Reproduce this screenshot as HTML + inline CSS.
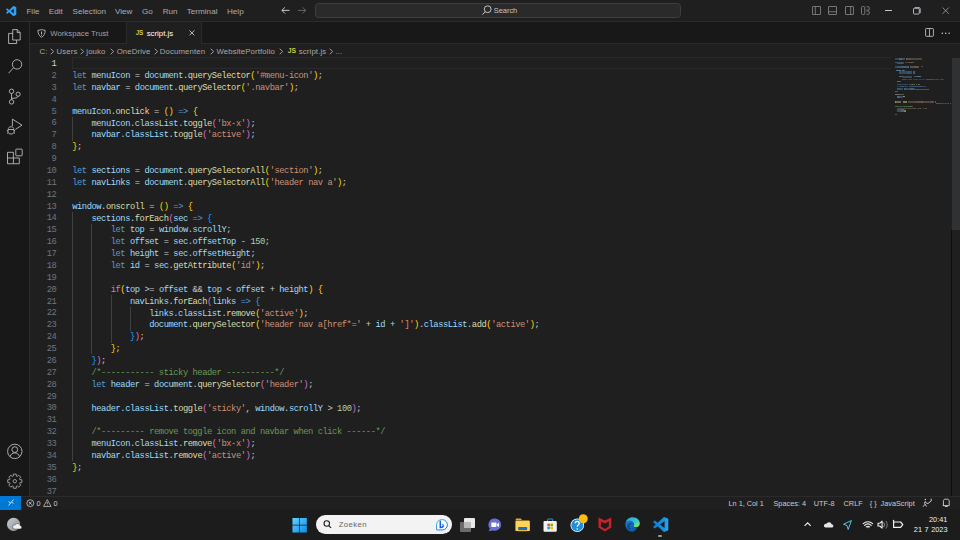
<!DOCTYPE html>
<html><head><meta charset="utf-8">
<style>
*{margin:0;padding:0;box-sizing:border-box}
html,body{width:960px;height:540px;overflow:hidden;background:#1f1f1f;font-family:"Liberation Sans",sans-serif;color:#ccc}
.a{position:absolute}
#title{left:0;top:0;width:960px;height:21.875px;background:#1f1f1f;border-bottom:0.7px solid #2b2b2b}
.menu{top:0.7px;height:21.875px;line-height:21.875px;font-size:8.125px;color:#adadad;white-space:nowrap}
#tabs{left:30px;top:21.875px;width:930px;height:21.875px;background:#181818;border-bottom:0.7px solid #2b2b2b}
#act{left:0;top:21.875px;width:30px;height:474.375px;background:#181818;border-right:0.7px solid #2b2b2b}
#bc{left:30px;top:43.75px;width:930px;height:13.75px;background:#1f1f1f}
.bct{top:44.6px;height:13.75px;line-height:13.75px;font-size:7.8px;letter-spacing:0.12px;color:#a9a9a9;white-space:nowrap}
#editor{left:30px;top:57.5px;width:930px;height:438.75px;background:#1f1f1f}
.ln{position:absolute;left:0;width:26.3px;text-align:right;font-family:"Liberation Mono",monospace;font-size:8.75px;letter-spacing:-0.4375px;line-height:11.875px;padding-top:1.6px;color:#6e7681}
.code{position:absolute;left:42.2px;padding-top:1.7px;font-family:"Liberation Mono",monospace;font-size:8.75px;letter-spacing:-0.4375px;line-height:11.875px;white-space:pre;color:#ccc}
.k{color:#569cd6}.c{color:#c586c0}.v{color:#9cdcfe}.f{color:#dcdcaa}.s{color:#ce9178}.n{color:#b5cea8}.m{color:#6a9955}
.b1{color:#ffd700}.b2{color:#da70d6}.b3{color:#179fff}
.ig{position:absolute;width:0.7px;background:#404040}
#status{left:0;top:496.25px;width:960px;height:13.75px;background:#1f1f1f;border-top:0.7px solid #2b2b2b}
.st{top:496.85px;height:13.75px;line-height:14px;font-size:7.3px;color:#ccc;white-space:nowrap}
#taskbar{left:0;top:510px;width:960px;height:30px;background:#1c1c1c}
svg{position:absolute;overflow:visible}
</style></head><body>
<!-- title bar -->
<div id="title" class="a"></div>
<svg style="left:5.7px;top:5.8px" width="10.4" height="10.2" viewBox="0 0 100 100"><path fill="#2ea2f2" d="M96.46 10.8L75.86.87a6.23 6.23 0 0 0-7.1 1.2L29.2 38.16 12 25.12a4.16 4.16 0 0 0-5.32.24L1.17 30.37a4.17 4.17 0 0 0 0 6.16L16.08 50 1.17 63.47a4.17 4.17 0 0 0 0 6.16l5.52 5a4.16 4.16 0 0 0 5.32.24l17.2-13.04 39.56 36.09a6.23 6.23 0 0 0 7.1 1.2l20.6-9.92A6.24 6.24 0 0 0 100 83.56V16.44a6.24 6.24 0 0 0-3.54-5.64zM75 72.7L45 50l30-22.7z"/></svg>
<div class="a menu" style="left:26.4px">File</div>
<div class="a menu" style="left:48.8px">Edit</div>
<div class="a menu" style="left:72.6px">Selection</div>
<div class="a menu" style="left:115px">View</div>
<div class="a menu" style="left:142px">Go</div>
<div class="a menu" style="left:162.7px">Run</div>
<div class="a menu" style="left:186.8px">Terminal</div>
<div class="a menu" style="left:227px">Help</div>
<svg style="left:276px;top:2px" width="36" height="18" viewBox="276 2 36 18" fill="none"><path d="M289.5 10.4H282M285 7.3L281.9 10.4L285 13.5" stroke="#d6dae0" stroke-width="0.9"/><path d="M298 10.4H305.6M302.6 7.3L305.7 10.4L302.6 13.5" stroke="#6e6e6e" stroke-width="0.9"/></svg>
<div class="a" style="left:315.1px;top:2.9px;width:365.9px;height:14.8px;background:#2a2a2a;border:0.7px solid #3e3e3e;border-radius:3.5px"></div>
<svg style="left:476px;top:2px" width="20" height="18" viewBox="476 2 20 18" fill="none"><circle cx="487.7" cy="9.2" r="3.4" stroke="#c8c8c8" stroke-width="0.95"/><path d="M485.3 11.6L482.4 14.6" stroke="#c8c8c8" stroke-width="1"/></svg>
<div class="a menu" style="left:493.7px;top:-0.3px;font-size:7.45px;color:#c4c4c4">Search</div>
<!-- layout icons -->
<svg style="left:812.1px;top:6px" width="9" height="9" viewBox="0 0 18 18"><rect x="1" y="1" width="16" height="16" rx="1" stroke="#8b8b8b" stroke-width="1.6" fill="none"/><path d="M6.6 1v16" stroke="#8b8b8b" stroke-width="1.6"/></svg>
<svg style="left:828.2px;top:6px" width="9" height="9" viewBox="0 0 18 18"><rect x="1" y="1" width="16" height="16" rx="1" stroke="#8b8b8b" stroke-width="1.6" fill="none"/><path d="M1 11.5h16" stroke="#8b8b8b" stroke-width="1.6"/></svg>
<svg style="left:844.8px;top:6px" width="9" height="9" viewBox="0 0 18 18"><rect x="1" y="1" width="16" height="16" rx="1" stroke="#8b8b8b" stroke-width="1.6" fill="none"/><path d="M11.4 1v16" stroke="#8b8b8b" stroke-width="1.6"/></svg>
<svg style="left:861.2px;top:6px" width="9" height="9" viewBox="0 0 18 18"><rect x="1" y="1" width="6.5" height="16" rx="2" stroke="#8b8b8b" stroke-width="1.6" fill="none"/><path d="M11 1.5h4a1.5 1.5 0 0 1 1.5 1.5v3.5a1.5 1.5 0 0 1-1.5 1.5h-4M11 10h4a1.5 1.5 0 0 1 1.5 1.5V15a1.5 1.5 0 0 1-1.5 1.5h-4" stroke="#8b8b8b" stroke-width="1.6" fill="none"/></svg>
<div class="a" style="left:884.7px;top:10.2px;width:7.6px;height:0.9px;background:#bfc6ce"></div>
<svg style="left:912.9px;top:6.6px" width="7.5" height="7.6" viewBox="0 0 15 15"><rect x="1" y="2.5" width="11.5" height="11.5" rx="1.5" stroke="#bfc6ce" stroke-width="1.8" fill="none"/><path d="M3.5 1h8.5a2.5 2.5 0 0 1 2.5 2.5V12" stroke="#bfc6ce" stroke-width="1.6" fill="none"/></svg>
<svg style="left:941.8px;top:6.9px" width="7.4" height="7.3" viewBox="0 0 15 15"><path d="M1 1l13 13M14 1L1 14" stroke="#bfc6ce" stroke-width="1.3"/></svg>

<!-- activity bar -->
<div id="act" class="a"></div>
<svg style="left:0;top:0" width="30" height="500" viewBox="0 0 30 500" fill="none" stroke="#c4c4c4" stroke-width="0.85" stroke-linejoin="round">
<path d="M12.7 29.6H17.2L20.2 32.6V40H12.7Z M17.2 29.6V32.6H20.2 M12.7 33.4H8.6V43.5H16.6V40"/>
<circle cx="17.05" cy="64.4" r="4.7"/><path d="M13.6 67.6L8.5 73.3"/>
<circle cx="11.55" cy="91.3" r="2.2"/><circle cx="11.55" cy="101.9" r="2.2"/><circle cx="18.1" cy="94.2" r="2.1"/><path d="M11.55 93.5V99.7M18 96.3C17.5 98 15.5 98.3 11.6 98.3"/>
<path d="M12.4 126V119.1L22 125.2L15.4 129.4"/><path d="M8.3 128.6C8.6 127.2 9.7 126.8 11 126.8S13.4 127.2 13.7 128.6M8 129.5V132.2C8 133.2 9.4 134 11 134S14 133.2 14 132.2V129.5Z M7 130.6H8M7 133H8M14 130.6H15M14 133H15"/>
<path d="M7.5 152.3H13.4V163.75H7.5Z M7.5 158H19.3V163.75H13.4"/><rect x="15.8" y="149.1" width="6.4" height="6.7" rx="0.6"/>
<circle cx="14.8" cy="451.4" r="7.2"/><circle cx="14.8" cy="449.6" r="2.9"/><path d="M10 456.6C10.8 454.2 12.6 452.9 14.8 452.9S18.8 454.2 19.6 456.6"/>
<path stroke="#9c9c9c" stroke-width="1.0" d="M13.23 476.14 L13.37 474.14 L16.23 474.14 L16.37 476.14 L17.27 476.51 L18.78 475.20 L20.80 477.22 L19.49 478.73 L19.86 479.63 L21.86 479.77 L21.86 482.63 L19.86 482.77 L19.49 483.67 L20.80 485.18 L18.78 487.20 L17.27 485.89 L16.37 486.26 L16.23 488.26 L13.37 488.26 L13.23 486.26 L12.33 485.89 L10.82 487.20 L8.80 485.18 L10.11 483.67 L9.74 482.77 L7.74 482.63 L7.74 479.77 L9.74 479.63 L10.11 478.73 L8.80 477.22 L10.82 475.20 L12.33 476.51Z"/><circle cx="14.8" cy="481.2" r="1.7" stroke="#9c9c9c" stroke-width="1.0"/>
</svg>

<!-- tabs -->
<div id="tabs" class="a"></div>
<div class="a" style="left:126px;top:21.875px;width:76px;height:22.5px;background:#1f1f1f;border-left:0.7px solid #2b2b2b;border-right:0.7px solid #2b2b2b"></div>
<svg style="left:36.8px;top:28.9px" width="9.1" height="8.9" viewBox="0 0 16 16"><path d="M1.5 2.2C4 2.2 6 1.8 8 1c2 .8 4 1.2 6.5 1.2 0 6.5-2.5 10.5-6.5 12.8C4 12.7 1.5 8.7 1.5 2.2Z" stroke="#cccccc" stroke-width="1.4" fill="none" stroke-linejoin="round"/><path d="M8 4.5v5.5" stroke="#ddd" stroke-width="1.5"/><circle cx="8" cy="12" r="0.8" fill="#ccc"/></svg>
<div class="a" style="left:50.2px;top:22.5px;height:21.875px;line-height:21.5px;font-size:7.8px;color:#a0a0a0;white-space:nowrap">Workspace Trust</div>
<div class="a" style="left:135.8px;top:22.6px;height:21.875px;line-height:20.5px;font-size:6.3px;font-weight:bold;color:#cbcb41;letter-spacing:-0.2px;white-space:nowrap">JS</div>
<div class="a" style="left:146.7px;top:22.8px;height:21.875px;line-height:21.5px;font-size:7.8px;color:#ffffff;white-space:nowrap">script.js</div>
<svg style="left:189.2px;top:29.5px" width="5.8" height="5.8" viewBox="0 0 12 12"><path d="M1 1l10 10M11 1L1 11" stroke="#ddd" stroke-width="1.7"/></svg>
<svg style="left:925.1px;top:28px" width="9" height="8.8" viewBox="0 0 18 18"><rect x="1" y="1" width="16" height="16" rx="1.5" stroke="#cccccc" stroke-width="1.7" fill="none"/><path d="M9 1v16" stroke="#ccc" stroke-width="1.6"/></svg>
<svg style="left:940.5px;top:31.5px" width="10" height="2.5" viewBox="0 0 10 2.5"><circle cx="1.3" cy="1.25" r="0.75" fill="#ccc"/><circle cx="4.7" cy="1.25" r="0.75" fill="#ccc"/><circle cx="8.1" cy="1.25" r="0.75" fill="#ccc"/></svg>

<!-- breadcrumbs -->
<div id="bc" class="a"></div>
<div class="a bct" style="left:39.4px">C:</div>
<div class="a bct" style="left:56.6px">Users</div>
<div class="a bct" style="left:86.3px">jouko</div>
<div class="a bct" style="left:116.7px">OneDrive</div>
<div class="a bct" style="left:159.8px">Documenten</div>
<div class="a bct" style="left:216.4px">WebsitePortfolio</div>
<div class="a bct" style="left:287.8px;top:43.9px;font-size:6.8px;font-weight:bold;color:#cbcb41;letter-spacing:-0.2px">JS</div>
<div class="a bct" style="left:298.8px">script.js</div>
<div class="a bct" style="left:335.5px">...</div>
<svg style="left:50px;top:47.6px" width="4.4" height="7" viewBox="0 0 8 12"><path d="M1.2 1l5.6 5-5.6 5" stroke="#b4b4b4" stroke-width="1.5" fill="none"/></svg>
<svg style="left:80px;top:47.6px" width="4.4" height="7" viewBox="0 0 8 12"><path d="M1.2 1l5.6 5-5.6 5" stroke="#b4b4b4" stroke-width="1.5" fill="none"/></svg>
<svg style="left:110px;top:47.6px" width="4.4" height="7" viewBox="0 0 8 12"><path d="M1.2 1l5.6 5-5.6 5" stroke="#b4b4b4" stroke-width="1.5" fill="none"/></svg>
<svg style="left:153.5px;top:47.6px" width="4.4" height="7" viewBox="0 0 8 12"><path d="M1.2 1l5.6 5-5.6 5" stroke="#b4b4b4" stroke-width="1.5" fill="none"/></svg>
<svg style="left:210px;top:47.6px" width="4.4" height="7" viewBox="0 0 8 12"><path d="M1.2 1l5.6 5-5.6 5" stroke="#b4b4b4" stroke-width="1.5" fill="none"/></svg>
<svg style="left:279px;top:47.6px" width="4.4" height="7" viewBox="0 0 8 12"><path d="M1.2 1l5.6 5-5.6 5" stroke="#b4b4b4" stroke-width="1.5" fill="none"/></svg>
<svg style="left:329.3px;top:47.6px" width="4.4" height="7" viewBox="0 0 8 12"><path d="M1.2 1l5.6 5-5.6 5" stroke="#b4b4b4" stroke-width="1.5" fill="none"/></svg>

<!-- editor -->
<div id="editor" class="a">
<div class="a" style="left:42.2px;top:-0.8px;width:819px;height:11.9px;border:0.9px solid #2a2a2a;border-right:none"></div>
<div class="ig" style="left:42.20px;top:59.375px;height:23.750px"></div>
<div class="ig" style="left:42.20px;top:154.375px;height:249.375px"></div>
<div class="ig" style="left:61.45px;top:166.250px;height:130.625px"></div>
<div class="ig" style="left:80.70px;top:237.500px;height:47.500px"></div>
<div class="ig" style="left:99.95px;top:249.375px;height:23.750px"></div>
<div class="ln" style="top:0.000px;color:#cccccc">1</div>
<div class="ln" style="top:11.875px;color:#6e7681">2</div>
<div class="code" style="top:11.875px"><span class="k">let</span> <span class="v">menuIcon</span> = <span class="v">document</span>.<span class="f">querySelector</span><span class="b1">(</span><span class="s">&#x27;#menu-icon&#x27;</span><span class="b1">)</span>;</div>
<div class="ln" style="top:23.750px;color:#6e7681">3</div>
<div class="code" style="top:23.750px"><span class="k">let</span> <span class="v">navbar</span> = <span class="v">document</span>.<span class="f">querySelector</span><span class="b1">(</span><span class="s">&#x27;.navbar&#x27;</span><span class="b1">)</span>;</div>
<div class="ln" style="top:35.625px;color:#6e7681">4</div>
<div class="ln" style="top:47.500px;color:#6e7681">5</div>
<div class="code" style="top:47.500px"><span class="v">menuIcon</span>.<span class="f">onclick</span> = <span class="b1">()</span> <span class="k">=&gt;</span> <span class="b1">{</span></div>
<div class="ln" style="top:59.375px;color:#6e7681">6</div>
<div class="code" style="top:59.375px">    <span class="v">menuIcon</span>.<span class="v">classList</span>.<span class="f">toggle</span><span class="b2">(</span><span class="s">&#x27;bx-x&#x27;</span><span class="b2">)</span>;</div>
<div class="ln" style="top:71.250px;color:#6e7681">7</div>
<div class="code" style="top:71.250px">    <span class="v">navbar</span>.<span class="v">classList</span>.<span class="f">toggle</span><span class="b2">(</span><span class="s">&#x27;active&#x27;</span><span class="b2">)</span>;</div>
<div class="ln" style="top:83.125px;color:#6e7681">8</div>
<div class="code" style="top:83.125px"><span class="b1">}</span>;</div>
<div class="ln" style="top:95.000px;color:#6e7681">9</div>
<div class="ln" style="top:106.875px;color:#6e7681">10</div>
<div class="code" style="top:106.875px"><span class="k">let</span> <span class="v">sections</span> = <span class="v">document</span>.<span class="f">querySelectorAll</span><span class="b1">(</span><span class="s">&#x27;section&#x27;</span><span class="b1">)</span>;</div>
<div class="ln" style="top:118.750px;color:#6e7681">11</div>
<div class="code" style="top:118.750px"><span class="k">let</span> <span class="v">navLinks</span> = <span class="v">document</span>.<span class="f">querySelectorAll</span><span class="b1">(</span><span class="s">&#x27;header nav a&#x27;</span><span class="b1">)</span>;</div>
<div class="ln" style="top:130.625px;color:#6e7681">12</div>
<div class="ln" style="top:142.500px;color:#6e7681">13</div>
<div class="code" style="top:142.500px"><span class="v">window</span>.<span class="f">onscroll</span> = <span class="b1">()</span> <span class="k">=&gt;</span> <span class="b1">{</span></div>
<div class="ln" style="top:154.375px;color:#6e7681">14</div>
<div class="code" style="top:154.375px">    <span class="v">sections</span>.<span class="f">forEach</span><span class="b2">(</span><span class="v">sec</span> <span class="k">=&gt;</span> <span class="b3">{</span></div>
<div class="ln" style="top:166.250px;color:#6e7681">15</div>
<div class="code" style="top:166.250px">        <span class="k">let</span> <span class="v">top</span> = <span class="v">window</span>.<span class="v">scrollY</span>;</div>
<div class="ln" style="top:178.125px;color:#6e7681">16</div>
<div class="code" style="top:178.125px">        <span class="k">let</span> <span class="v">offset</span> = <span class="v">sec</span>.<span class="v">offsetTop</span> - <span class="n">150</span>;</div>
<div class="ln" style="top:190.000px;color:#6e7681">17</div>
<div class="code" style="top:190.000px">        <span class="k">let</span> <span class="v">height</span> = <span class="v">sec</span>.<span class="v">offsetHeight</span>;</div>
<div class="ln" style="top:201.875px;color:#6e7681">18</div>
<div class="code" style="top:201.875px">        <span class="k">let</span> <span class="v">id</span> = <span class="v">sec</span>.<span class="f">getAttribute</span><span class="b1">(</span><span class="s">&#x27;id&#x27;</span><span class="b1">)</span>;</div>
<div class="ln" style="top:213.750px;color:#6e7681">19</div>
<div class="ln" style="top:225.625px;color:#6e7681">20</div>
<div class="code" style="top:225.625px">        <span class="c">if</span><span class="b1">(</span><span class="v">top</span> &gt;= <span class="v">offset</span> &amp;&amp; <span class="v">top</span> &lt; <span class="v">offset</span> + <span class="v">height</span><span class="b1">)</span> <span class="b1">{</span></div>
<div class="ln" style="top:237.500px;color:#6e7681">21</div>
<div class="code" style="top:237.500px">            <span class="v">navLinks</span>.<span class="f">forEach</span><span class="b2">(</span><span class="v">links</span> <span class="k">=&gt;</span> <span class="b3">{</span></div>
<div class="ln" style="top:249.375px;color:#6e7681">22</div>
<div class="code" style="top:249.375px">                <span class="v">links</span>.<span class="v">classList</span>.<span class="f">remove</span><span class="b1">(</span><span class="s">&#x27;active&#x27;</span><span class="b1">)</span>;</div>
<div class="ln" style="top:261.250px;color:#6e7681">23</div>
<div class="code" style="top:261.250px">                <span class="v">document</span>.<span class="f">querySelector</span><span class="b1">(</span><span class="s">&#x27;header nav a[href*=&#x27;</span> + <span class="v">id</span> + <span class="s">&#x27;]&#x27;</span><span class="b1">)</span>.<span class="v">classList</span>.<span class="f">add</span><span class="b1">(</span><span class="s">&#x27;active&#x27;</span><span class="b1">)</span>;</div>
<div class="ln" style="top:273.125px;color:#6e7681">24</div>
<div class="code" style="top:273.125px">            <span class="b3">}</span><span class="b2">)</span>;</div>
<div class="ln" style="top:285.000px;color:#6e7681">25</div>
<div class="code" style="top:285.000px">        <span class="b1">}</span>;</div>
<div class="ln" style="top:296.875px;color:#6e7681">26</div>
<div class="code" style="top:296.875px">    <span class="b3">}</span><span class="b2">)</span>;</div>
<div class="ln" style="top:308.750px;color:#6e7681">27</div>
<div class="code" style="top:308.750px">    <span class="m">/*----------- sticky header ----------*/</span></div>
<div class="ln" style="top:320.625px;color:#6e7681">28</div>
<div class="code" style="top:320.625px">    <span class="k">let</span> <span class="v">header</span> = <span class="v">document</span>.<span class="f">querySelector</span><span class="b2">(</span><span class="s">&#x27;header&#x27;</span><span class="b2">)</span>;</div>
<div class="ln" style="top:332.500px;color:#6e7681">29</div>
<div class="ln" style="top:344.375px;color:#6e7681">30</div>
<div class="code" style="top:344.375px">    <span class="v">header</span>.<span class="v">classList</span>.<span class="f">toggle</span><span class="b2">(</span><span class="s">&#x27;sticky&#x27;</span>, <span class="v">window</span>.<span class="v">scrollY</span> &gt; <span class="n">100</span><span class="b2">)</span>;</div>
<div class="ln" style="top:356.250px;color:#6e7681">31</div>
<div class="ln" style="top:368.125px;color:#6e7681">32</div>
<div class="code" style="top:368.125px">    <span class="m">/*--------- remove toggle icon and navbar when click ------*/</span></div>
<div class="ln" style="top:380.000px;color:#6e7681">33</div>
<div class="code" style="top:380.000px">    <span class="v">menuIcon</span>.<span class="v">classList</span>.<span class="f">remove</span><span class="b2">(</span><span class="s">&#x27;bx-x&#x27;</span><span class="b2">)</span>;</div>
<div class="ln" style="top:391.875px;color:#6e7681">34</div>
<div class="code" style="top:391.875px">    <span class="v">navbar</span>.<span class="v">classList</span>.<span class="f">remove</span><span class="b2">(</span><span class="s">&#x27;active&#x27;</span><span class="b2">)</span>;</div>
<div class="ln" style="top:403.750px;color:#6e7681">35</div>
<div class="code" style="top:403.750px"><span class="b1">}</span>;</div>
<div class="ln" style="top:415.625px;color:#6e7681">36</div>
<div class="ln" style="top:427.500px;color:#6e7681">37</div>
<div class="a" style="left:865.00px;top:0.80px;width:2.60px;height:1.30px;background:#3f6a8f;opacity:0.50"></div>
<div class="a" style="left:867.90px;top:0.80px;width:0.10px;height:1.30px;background:#3f6a8f;opacity:0.50"></div>
<div class="a" style="left:869.00px;top:0.80px;width:2.60px;height:1.30px;background:#5f7f9a;opacity:0.75"></div>
<div class="a" style="left:871.60px;top:0.80px;width:3.90px;height:1.30px;background:#5f7f9a;opacity:0.50"></div>
<div class="a" style="left:875.50px;top:0.80px;width:0.50px;height:1.30px;background:#5f7f9a;opacity:0.62"></div>
<div class="a" style="left:876.00px;top:0.80px;width:1.30px;height:1.30px;background:#7a6a55;opacity:0.50"></div>
<div class="a" style="left:877.30px;top:0.80px;width:3.90px;height:1.30px;background:#7a6a55;opacity:0.62"></div>
<div class="a" style="left:881.20px;top:0.80px;width:3.90px;height:1.30px;background:#7a6a55;opacity:0.50"></div>
<div class="a" style="left:885.10px;top:0.80px;width:3.90px;height:1.30px;background:#7a6a55;opacity:0.50"></div>
<div class="a" style="left:889.30px;top:0.80px;width:1.30px;height:1.30px;background:#7a6a55;opacity:0.50"></div>
<div class="a" style="left:890.60px;top:0.80px;width:0.40px;height:1.30px;background:#7a6a55;opacity:0.50"></div>
<div class="a" style="left:865.00px;top:4.70px;width:2.00px;height:1.30px;background:#6a8fb0;opacity:0.50"></div>
<div class="a" style="left:867.00px;top:4.70px;width:3.90px;height:1.50px;background:#4f7394;opacity:0.62"></div>
<div class="a" style="left:870.90px;top:4.70px;width:1.30px;height:1.50px;background:#4f7394;opacity:0.75"></div>
<div class="a" style="left:872.20px;top:4.70px;width:1.80px;height:1.50px;background:#4f7394;opacity:0.50"></div>
<div class="a" style="left:875.00px;top:4.70px;width:3.90px;height:1.30px;background:#7a6a55;opacity:0.50"></div>
<div class="a" style="left:878.90px;top:4.70px;width:3.25px;height:1.30px;background:#7a6a55;opacity:0.75"></div>
<div class="a" style="left:882.45px;top:4.70px;width:1.55px;height:1.30px;background:#7a6a55;opacity:0.62"></div>
<div class="a" style="left:865.00px;top:8.80px;width:2.60px;height:1.30px;background:#3f6a8f;opacity:0.62"></div>
<div class="a" style="left:867.60px;top:8.80px;width:1.95px;height:1.30px;background:#3f6a8f;opacity:0.75"></div>
<div class="a" style="left:869.55px;top:8.80px;width:0.45px;height:1.30px;background:#3f6a8f;opacity:0.75"></div>
<div class="a" style="left:871.00px;top:8.80px;width:3.90px;height:1.30px;background:#5f7f9a;opacity:0.62"></div>
<div class="a" style="left:874.90px;top:8.80px;width:3.25px;height:1.30px;background:#5f7f9a;opacity:0.62"></div>
<div class="a" style="left:878.15px;top:8.80px;width:1.30px;height:1.30px;background:#5f7f9a;opacity:0.75"></div>
<div class="a" style="left:879.75px;top:8.80px;width:1.25px;height:1.30px;background:#5f7f9a;opacity:0.62"></div>
<div class="a" style="left:881.00px;top:8.80px;width:3.25px;height:1.30px;background:#7a6a55;opacity:0.62"></div>
<div class="a" style="left:884.25px;top:8.80px;width:1.30px;height:1.30px;background:#7a6a55;opacity:0.75"></div>
<div class="a" style="left:885.55px;top:8.80px;width:2.60px;height:1.30px;background:#7a6a55;opacity:0.75"></div>
<div class="a" style="left:888.15px;top:8.80px;width:0.85px;height:1.30px;background:#7a6a55;opacity:0.62"></div>
<div class="a" style="left:891.00px;top:8.80px;width:1.30px;height:1.00px;background:#6a6a6a;opacity:0.50"></div>
<div class="a" style="left:892.30px;top:8.80px;width:0.70px;height:1.00px;background:#6a6a6a;opacity:0.75"></div>
<div class="a" style="left:866.00px;top:12.10px;width:1.30px;height:1.20px;background:#6b8fae;opacity:0.75"></div>
<div class="a" style="left:867.30px;top:12.10px;width:3.90px;height:1.20px;background:#6b8fae;opacity:0.75"></div>
<div class="a" style="left:871.50px;top:12.10px;width:2.60px;height:1.20px;background:#6b8fae;opacity:0.75"></div>
<div class="a" style="left:874.40px;top:12.10px;width:0.60px;height:1.20px;background:#6b8fae;opacity:0.50"></div>
<div class="a" style="left:869.00px;top:13.70px;width:2.60px;height:2.60px;background:#3f76a8;opacity:0.50"></div>
<div class="a" style="left:871.60px;top:13.70px;width:3.25px;height:2.60px;background:#3f76a8;opacity:0.50"></div>
<div class="a" style="left:874.85px;top:13.70px;width:2.60px;height:2.60px;background:#3f76a8;opacity:0.50"></div>
<div class="a" style="left:877.45px;top:13.70px;width:3.25px;height:2.60px;background:#3f76a8;opacity:0.62"></div>
<div class="a" style="left:881.00px;top:13.70px;width:1.30px;height:2.60px;background:#3f76a8;opacity:0.50"></div>
<div class="a" style="left:882.60px;top:13.70px;width:2.40px;height:2.60px;background:#3f76a8;opacity:0.75"></div>
<div class="a" style="left:869.00px;top:18.50px;width:1.95px;height:1.20px;background:#8a8a8a;opacity:0.62"></div>
<div class="a" style="left:870.95px;top:18.50px;width:2.05px;height:1.20px;background:#8a8a8a;opacity:0.62"></div>
<div class="a" style="left:873.00px;top:18.70px;width:1.95px;height:2.00px;background:#4f7394;opacity:0.50"></div>
<div class="a" style="left:874.95px;top:18.70px;width:1.95px;height:2.00px;background:#4f7394;opacity:0.50"></div>
<div class="a" style="left:876.90px;top:18.70px;width:1.95px;height:2.00px;background:#4f7394;opacity:0.50"></div>
<div class="a" style="left:879.15px;top:18.70px;width:2.85px;height:2.00px;background:#4f7394;opacity:0.50"></div>
<div class="a" style="left:884.00px;top:18.30px;width:2.60px;height:1.00px;background:#6a8fb0;opacity:0.50"></div>
<div class="a" style="left:886.60px;top:18.30px;width:3.25px;height:1.00px;background:#6a8fb0;opacity:0.75"></div>
<div class="a" style="left:889.85px;top:18.30px;width:0.15px;height:1.00px;background:#6a8fb0;opacity:0.75"></div>
<div class="a" style="left:872.00px;top:21.50px;width:1.95px;height:1.20px;background:#5a5060;opacity:0.75"></div>
<div class="a" style="left:873.95px;top:21.50px;width:3.25px;height:1.20px;background:#5a5060;opacity:0.75"></div>
<div class="a" style="left:877.50px;top:21.50px;width:3.25px;height:1.20px;background:#5a5060;opacity:0.62"></div>
<div class="a" style="left:881.05px;top:21.50px;width:1.30px;height:1.20px;background:#5a5060;opacity:0.62"></div>
<div class="a" style="left:882.65px;top:21.50px;width:1.30px;height:1.20px;background:#5a5060;opacity:0.50"></div>
<div class="a" style="left:883.95px;top:21.50px;width:1.95px;height:1.20px;background:#5a5060;opacity:0.62"></div>
<div class="a" style="left:885.90px;top:21.50px;width:1.30px;height:1.20px;background:#5a5060;opacity:0.62"></div>
<div class="a" style="left:887.20px;top:21.50px;width:1.30px;height:1.20px;background:#5a5060;opacity:0.50"></div>
<div class="a" style="left:888.50px;top:21.50px;width:3.90px;height:1.20px;background:#5a5060;opacity:0.50"></div>
<div class="a" style="left:892.40px;top:21.50px;width:2.60px;height:1.20px;background:#5a5060;opacity:0.50"></div>
<div class="a" style="left:896.00px;top:21.50px;width:1.95px;height:1.00px;background:#6e5a4a;opacity:0.75"></div>
<div class="a" style="left:898.25px;top:21.50px;width:1.95px;height:1.00px;background:#6e5a4a;opacity:0.75"></div>
<div class="a" style="left:900.20px;top:21.50px;width:2.60px;height:1.00px;background:#6e5a4a;opacity:0.75"></div>
<div class="a" style="left:902.80px;top:21.50px;width:3.25px;height:1.00px;background:#6e5a4a;opacity:0.50"></div>
<div class="a" style="left:906.05px;top:21.50px;width:3.25px;height:1.00px;background:#6e5a4a;opacity:0.62"></div>
<div class="a" style="left:909.60px;top:21.50px;width:3.25px;height:1.00px;background:#6e5a4a;opacity:0.62"></div>
<div class="a" style="left:912.85px;top:21.50px;width:1.15px;height:1.00px;background:#6e5a4a;opacity:0.50"></div>
<div class="a" style="left:867.00px;top:23.70px;width:2.60px;height:1.00px;background:#8a8a8a;opacity:0.62"></div>
<div class="a" style="left:869.60px;top:23.70px;width:0.40px;height:1.00px;background:#8a8a8a;opacity:0.50"></div>
<div class="a" style="left:867.00px;top:26.00px;width:3.90px;height:1.20px;background:#3f6a8f;opacity:0.62"></div>
<div class="a" style="left:870.90px;top:26.00px;width:3.90px;height:1.20px;background:#3f6a8f;opacity:0.50"></div>
<div class="a" style="left:874.80px;top:26.00px;width:1.30px;height:1.20px;background:#3f6a8f;opacity:0.75"></div>
<div class="a" style="left:876.10px;top:26.00px;width:1.90px;height:1.20px;background:#3f6a8f;opacity:0.62"></div>
<div class="a" style="left:879.00px;top:26.00px;width:2.60px;height:1.20px;background:#7a7a55;opacity:0.50"></div>
<div class="a" style="left:881.60px;top:26.00px;width:1.95px;height:1.20px;background:#7a7a55;opacity:0.75"></div>
<div class="a" style="left:883.55px;top:26.00px;width:1.95px;height:1.20px;background:#7a7a55;opacity:0.62"></div>
<div class="a" style="left:885.50px;top:26.00px;width:1.95px;height:1.20px;background:#7a7a55;opacity:0.75"></div>
<div class="a" style="left:887.75px;top:26.00px;width:2.25px;height:1.20px;background:#7a7a55;opacity:0.75"></div>
<div class="a" style="left:867.00px;top:28.50px;width:1.30px;height:1.10px;background:#3f6a8f;opacity:0.62"></div>
<div class="a" style="left:868.60px;top:28.50px;width:2.60px;height:1.10px;background:#3f6a8f;opacity:0.50"></div>
<div class="a" style="left:871.20px;top:28.50px;width:3.25px;height:1.10px;background:#3f6a8f;opacity:0.75"></div>
<div class="a" style="left:874.45px;top:28.50px;width:2.60px;height:1.10px;background:#3f6a8f;opacity:0.50"></div>
<div class="a" style="left:877.05px;top:28.50px;width:1.30px;height:1.10px;background:#3f6a8f;opacity:0.50"></div>
<div class="a" style="left:878.65px;top:28.50px;width:1.95px;height:1.10px;background:#3f6a8f;opacity:0.62"></div>
<div class="a" style="left:880.60px;top:28.50px;width:3.25px;height:1.10px;background:#3f6a8f;opacity:0.75"></div>
<div class="a" style="left:883.85px;top:28.50px;width:3.25px;height:1.10px;background:#3f6a8f;opacity:0.75"></div>
<div class="a" style="left:887.10px;top:28.50px;width:1.30px;height:1.10px;background:#3f6a8f;opacity:0.75"></div>
<div class="a" style="left:888.40px;top:28.50px;width:3.25px;height:1.10px;background:#3f6a8f;opacity:0.75"></div>
<div class="a" style="left:891.65px;top:28.50px;width:3.25px;height:1.10px;background:#3f6a8f;opacity:0.50"></div>
<div class="a" style="left:895.20px;top:28.50px;width:0.80px;height:1.10px;background:#3f6a8f;opacity:0.50"></div>
<div class="a" style="left:867.00px;top:30.90px;width:3.25px;height:1.60px;background:#4f7394;opacity:0.62"></div>
<div class="a" style="left:870.25px;top:30.90px;width:1.95px;height:1.60px;background:#4f7394;opacity:0.50"></div>
<div class="a" style="left:872.20px;top:30.90px;width:1.30px;height:1.60px;background:#4f7394;opacity:0.50"></div>
<div class="a" style="left:873.80px;top:30.90px;width:1.95px;height:1.60px;background:#4f7394;opacity:0.75"></div>
<div class="a" style="left:876.05px;top:30.90px;width:2.60px;height:1.60px;background:#4f7394;opacity:0.50"></div>
<div class="a" style="left:878.65px;top:30.90px;width:1.30px;height:1.60px;background:#4f7394;opacity:0.50"></div>
<div class="a" style="left:879.95px;top:30.90px;width:3.90px;height:1.60px;background:#4f7394;opacity:0.75"></div>
<div class="a" style="left:883.85px;top:30.90px;width:0.15px;height:1.60px;background:#4f7394;opacity:0.50"></div>
<div class="a" style="left:885.00px;top:31.10px;width:1.30px;height:1.10px;background:#567a5a;opacity:0.62"></div>
<div class="a" style="left:886.30px;top:31.10px;width:2.60px;height:1.10px;background:#567a5a;opacity:0.75"></div>
<div class="a" style="left:888.90px;top:31.10px;width:3.90px;height:1.10px;background:#567a5a;opacity:0.62"></div>
<div class="a" style="left:892.80px;top:31.10px;width:3.90px;height:1.10px;background:#567a5a;opacity:0.62"></div>
<div class="a" style="left:896.70px;top:31.10px;width:1.30px;height:1.10px;background:#567a5a;opacity:0.75"></div>
<div class="a" style="left:898.00px;top:31.10px;width:1.00px;height:1.10px;background:#567a5a;opacity:0.75"></div>
<div class="a" style="left:865.00px;top:33.50px;width:3.00px;height:1.00px;background:#8a8a8a;opacity:0.50"></div>
<div class="a" style="left:865.00px;top:36.30px;width:3.90px;height:1.00px;background:#8a8a8a;opacity:0.75"></div>
<div class="a" style="left:868.90px;top:36.30px;width:3.25px;height:1.00px;background:#8a8a8a;opacity:0.50"></div>
<div class="a" style="left:872.15px;top:36.30px;width:1.85px;height:1.00px;background:#8a8a8a;opacity:0.50"></div>
<div class="a" style="left:867.00px;top:38.50px;width:3.25px;height:2.40px;background:#4f7ab0;opacity:0.75"></div>
<div class="a" style="left:870.25px;top:38.50px;width:2.75px;height:2.40px;background:#4f7ab0;opacity:0.50"></div>
<div class="a" style="left:873.00px;top:38.50px;width:2.00px;height:1.00px;background:#c8b060;opacity:0.75"></div>
<div class="a" style="left:865.00px;top:43.30px;width:1.30px;height:2.60px;background:#b8b080;opacity:0.75"></div>
<div class="a" style="left:866.30px;top:43.30px;width:1.95px;height:2.60px;background:#b8b080;opacity:0.50"></div>
<div class="a" style="left:868.25px;top:43.30px;width:1.30px;height:2.60px;background:#b8b080;opacity:0.50"></div>
<div class="a" style="left:869.85px;top:43.30px;width:1.15px;height:2.60px;background:#b8b080;opacity:0.50"></div>
<div class="a" style="left:873.00px;top:43.30px;width:3.25px;height:2.60px;background:#b8b080;opacity:0.62"></div>
<div class="a" style="left:876.25px;top:43.30px;width:0.75px;height:2.60px;background:#b8b080;opacity:0.62"></div>
<div class="a" style="left:878.00px;top:43.30px;width:3.90px;height:2.40px;background:#8a6a55;opacity:0.50"></div>
<div class="a" style="left:881.90px;top:43.30px;width:3.90px;height:2.40px;background:#8a6a55;opacity:0.50"></div>
<div class="a" style="left:886.10px;top:43.30px;width:1.95px;height:2.40px;background:#8a6a55;opacity:0.62"></div>
<div class="a" style="left:888.05px;top:43.30px;width:3.25px;height:2.40px;background:#8a6a55;opacity:0.62"></div>
<div class="a" style="left:891.30px;top:43.30px;width:1.30px;height:2.40px;background:#8a6a55;opacity:0.75"></div>
<div class="a" style="left:892.60px;top:43.30px;width:3.25px;height:2.40px;background:#8a6a55;opacity:0.50"></div>
<div class="a" style="left:895.85px;top:43.30px;width:2.60px;height:2.40px;background:#8a6a55;opacity:0.50"></div>
<div class="a" style="left:898.45px;top:43.30px;width:2.60px;height:2.40px;background:#8a6a55;opacity:0.50"></div>
<div class="a" style="left:901.05px;top:43.30px;width:1.95px;height:2.40px;background:#8a6a55;opacity:0.62"></div>
<div class="a" style="left:903.00px;top:43.30px;width:1.30px;height:2.40px;background:#8a6a55;opacity:0.62"></div>
<div class="a" style="left:904.60px;top:43.30px;width:1.40px;height:2.40px;background:#8a6a55;opacity:0.75"></div>
<div class="a" style="left:906.00px;top:45.30px;width:1.95px;height:1.00px;background:#5f6a7a;opacity:0.75"></div>
<div class="a" style="left:908.25px;top:45.30px;width:3.90px;height:1.00px;background:#5f6a7a;opacity:0.62"></div>
<div class="a" style="left:912.15px;top:45.30px;width:3.25px;height:1.00px;background:#5f6a7a;opacity:0.50"></div>
<div class="a" style="left:915.40px;top:45.30px;width:2.60px;height:1.00px;background:#5f6a7a;opacity:0.50"></div>
<div class="a" style="left:918.00px;top:45.30px;width:1.30px;height:1.00px;background:#5f6a7a;opacity:0.62"></div>
<div class="a" style="left:919.60px;top:45.30px;width:0.40px;height:1.00px;background:#5f6a7a;opacity:0.75"></div>
<div class="a" style="left:865.00px;top:48.90px;width:3.25px;height:1.00px;background:#5a8a5a;opacity:0.62"></div>
<div class="a" style="left:868.25px;top:48.90px;width:3.90px;height:1.00px;background:#5a8a5a;opacity:0.50"></div>
<div class="a" style="left:872.15px;top:48.90px;width:1.95px;height:1.00px;background:#5a8a5a;opacity:0.50"></div>
<div class="a" style="left:874.10px;top:48.90px;width:2.60px;height:1.00px;background:#5a8a5a;opacity:0.62"></div>
<div class="a" style="left:876.70px;top:48.90px;width:1.95px;height:1.00px;background:#5a8a5a;opacity:0.62"></div>
<div class="a" style="left:878.65px;top:48.90px;width:3.25px;height:1.00px;background:#5a8a5a;opacity:0.75"></div>
<div class="a" style="left:881.90px;top:48.90px;width:0.10px;height:1.00px;background:#5a8a5a;opacity:0.50"></div>
<div class="a" style="left:867.00px;top:50.10px;width:2.60px;height:1.20px;background:#7a6a55;opacity:0.50"></div>
<div class="a" style="left:869.60px;top:50.10px;width:1.30px;height:1.20px;background:#7a6a55;opacity:0.75"></div>
<div class="a" style="left:870.90px;top:50.10px;width:3.25px;height:1.20px;background:#7a6a55;opacity:0.50"></div>
<div class="a" style="left:874.15px;top:50.10px;width:1.30px;height:1.20px;background:#7a6a55;opacity:0.75"></div>
<div class="a" style="left:875.45px;top:50.10px;width:2.60px;height:1.20px;background:#7a6a55;opacity:0.50"></div>
<div class="a" style="left:878.05px;top:50.10px;width:1.30px;height:1.20px;background:#7a6a55;opacity:0.62"></div>
<div class="a" style="left:879.35px;top:50.10px;width:3.25px;height:1.20px;background:#7a6a55;opacity:0.50"></div>
<div class="a" style="left:882.60px;top:50.10px;width:3.90px;height:1.20px;background:#7a6a55;opacity:0.62"></div>
<div class="a" style="left:886.50px;top:50.10px;width:3.90px;height:1.20px;background:#7a6a55;opacity:0.50"></div>
<div class="a" style="left:890.40px;top:50.10px;width:0.60px;height:1.20px;background:#7a6a55;opacity:0.75"></div>
<div class="a" style="left:893.00px;top:50.50px;width:1.30px;height:0.80px;background:#7a6a55;opacity:0.50"></div>
<div class="a" style="left:894.30px;top:50.50px;width:1.30px;height:0.80px;background:#7a6a55;opacity:0.50"></div>
<div class="a" style="left:895.60px;top:50.50px;width:0.40px;height:0.80px;background:#7a6a55;opacity:0.75"></div>
<div class="a" style="left:867.00px;top:51.90px;width:3.90px;height:2.60px;background:#4f7ab0;opacity:0.50"></div>
<div class="a" style="left:870.90px;top:51.90px;width:3.10px;height:2.60px;background:#4f7ab0;opacity:0.75"></div>
<div class="a" style="left:874.00px;top:52.50px;width:2.00px;height:1.60px;background:#c8c070;opacity:0.62"></div>
<div class="a" style="left:865.00px;top:56.00px;width:2.00px;height:1.00px;background:#8a8a8a;opacity:0.50"></div>
<div class="a" style="left:921.5px;top:0;width:8.5px;height:172.1px;background:#303133"></div>
<div class="a" style="left:920.8px;top:172.1px;width:0.9px;height:270px;background:#0d0d0d"></div>
</div>

<!-- status bar -->
<div id="status" class="a"></div>
<div class="a" style="left:0;top:496.25px;width:20.8px;height:13.75px;background:#0078d4"></div>
<svg style="left:7.6px;top:499px" width="6" height="7" viewBox="0 0 12 14"><path d="M1 13L11 1M1 5l4 3M7 6l4 3" stroke="#fff" stroke-width="1.5" fill="none"/></svg>
<svg style="left:25.8px;top:498.8px" width="8.6" height="8.4" viewBox="0 0 16 16"><circle cx="8" cy="8" r="6.6" stroke="#d0d0d0" stroke-width="1.5" fill="none"/><path d="M5.4 5.4l5.2 5.2M10.6 5.4l-5.2 5.2" stroke="#e0e0e0" stroke-width="1.6"/></svg>
<div class="a st" style="left:36.6px">0</div>
<svg style="left:43px;top:498.8px" width="8.6" height="8" viewBox="0 0 16 15"><path d="M8 1.2L15 14H1z" stroke="#ccc" stroke-width="1.4" fill="none" stroke-linejoin="round"/><path d="M8 5.5v4.2" stroke="#ccc" stroke-width="1.4"/><circle cx="8" cy="11.6" r="0.8" fill="#ccc"/></svg>
<div class="a st" style="left:53.4px">0</div>
<div class="a st" style="left:728.5px">Ln 1, Col 1</div>
<div class="a st" style="left:773.5px">Spaces: 4</div>
<div class="a st" style="left:813.8px">UTF-8</div>
<div class="a st" style="left:843.6px">CRLF</div>
<div class="a st" style="left:869.8px">{ }</div>
<div class="a st" style="left:880.6px">JavaScript</div>
<svg style="left:918px;top:496px" width="38" height="14" viewBox="918 496 38 14" fill="none" stroke="#d0d0d0" stroke-width="0.95" stroke-linecap="round" stroke-linejoin="round"><circle cx="925.4" cy="499.5" r="0.75" fill="#d0d0d0" stroke="none"/><path d="M925.3 501.4C924.3 502.2 924.2 503.4 925.1 504.1L926.3 506.2M924.7 504.6L923.4 506.4M925.6 502.6L927.9 503.6L931.2 501V499"/><path d="M943.4 505.6V501.2C943.4 499.9 944.2 499.2 945.2 499.2H947.4C948.4 499.2 949.2 499.9 949.2 501.2V505.6H943.2M945.3 506.5H947.3"/></svg>


<!-- taskbar -->
<div id="taskbar" class="a"></div>
<!-- weather -->
<svg style="left:0;top:510px" width="30" height="30" viewBox="0 0 30 30"><defs><linearGradient id="mg" x1="0" y1="0" x2="1" y2="1"><stop offset="0" stop-color="#c8ccd2"/><stop offset="1" stop-color="#8a8f96"/></linearGradient></defs><circle cx="13.6" cy="14.4" r="6.6" fill="url(#mg)"/><path d="M14.2 19H20a1.6 1.6 0 0 0 .3-3.2 2.6 2.6 0 0 0-4.9-.9 1.9 1.9 0 0 0-1.2 4.1z" fill="#f0f0f0" stroke="#1c1c1c" stroke-width="0.4"/></svg>
<!-- start -->
<svg style="left:291.8px;top:517.8px" width="15.3" height="14.4" viewBox="0 0 16 16"><defs><linearGradient id="wg" x1="0" y1="0" x2="1" y2="1"><stop offset="0" stop-color="#5fd3ff"/><stop offset="1" stop-color="#0f8de8"/></linearGradient></defs><path d="M0 0h7.6v7.6H0zM8.4 0H16v7.6H8.4zM0 8.4h7.6V16H0zM8.4 8.4H16V16H8.4z" fill="url(#wg)"/></svg>
<!-- search pill -->
<div class="a" style="left:315.8px;top:515.1px;width:136.2px;height:18.7px;background:#f3f3f3;border-radius:9.35px"></div>
<svg style="left:322.9px;top:520px" width="8.8" height="8.4" viewBox="0 0 16 16"><circle cx="6.8" cy="6.8" r="5.2" stroke="#1a1a1a" stroke-width="2" fill="none"/><path d="M10.6 10.6L15 15" stroke="#1a1a1a" stroke-width="2.2"/></svg>
<div class="a" style="left:338.7px;top:516.2px;height:18.7px;line-height:18.7px;font-size:7.7px;letter-spacing:0.45px;color:#646464;white-space:nowrap">Zoeken</div>
<svg style="left:436px;top:518.9px" width="12.5" height="11.6" viewBox="0 0 25 23"><defs><linearGradient id="bg1" x1="0" y1="0" x2="1" y2="1"><stop offset="0" stop-color="#25c2f0"/><stop offset="1" stop-color="#1a5fe0"/></linearGradient></defs><path d="M12.5 1.2a10.3 10.3 0 1 1 0 20.6H1.2V11.5A10.3 10.3 0 0 1 12.5 1.2z" stroke="url(#bg1)" stroke-width="2" fill="#fff"/><path d="M8.5 4.5v12.5c3 .2 6-1.2 6.5-4.2" stroke="#1653e0" stroke-width="2.8" fill="none" stroke-linecap="round"/><path d="M15 12.5l-2.5-1.5" stroke="#20b8e8" stroke-width="2.6" stroke-linecap="round"/></svg>
<!-- task view -->
<div class="a" style="left:460px;top:521.6px;width:10.6px;height:10.2px;background:#6b6b6b;border-radius:1px"></div>
<div class="a" style="left:464.3px;top:517.6px;width:11.1px;height:10.3px;background:#e9e9e9;border-radius:1px"></div>
<div class="a" style="left:464.3px;top:521.6px;width:6.3px;height:6.3px;background:#b9b9b9"></div>
<!-- teams chat -->
<svg style="left:487.5px;top:518px" width="14.4" height="13.8" viewBox="0 0 28 27"><path d="M14 1a13 12 0 1 1-5.5 23.3L1.5 26l2-5.5A12 12 0 0 1 14 1z" fill="#6a6fd6"/><rect x="6.5" y="9" width="10" height="8.5" rx="1.5" fill="#fff"/><path d="M17.5 12l4-2.5v8l-4-2.5z" fill="#fff"/></svg>
<!-- file explorer -->
<svg style="left:514.7px;top:518px" width="15.3" height="13.5" viewBox="0 0 30 27"><path d="M1 3a2 2 0 0 1 2-2h8l3 3H1z" fill="#e8a828"/><path d="M1 5h27a1 1 0 0 1 1 1v20H1z" fill="#ffc83d"/><path d="M1 6.5h28v19H1z" fill="#ffd35a"/><rect x="6" y="18" width="18" height="6" rx="1" fill="#1570c9"/><rect x="6" y="24" width="18" height="2.5" fill="#f5b828"/></svg>
<!-- store -->
<svg style="left:542.7px;top:517.7px" width="14.3" height="14.3" viewBox="0 0 28 28"><path d="M9 6V3a1 1 0 0 1 1-1h8a1 1 0 0 1 1 1v3" stroke="#27a9e8" stroke-width="1.8" fill="none"/><rect x="1" y="6" width="26" height="21" rx="2" fill="#f2f2f2"/><rect x="8.5" y="11" width="5" height="5" fill="#f25022"/><rect x="14.5" y="11" width="5" height="5" fill="#7fba00"/><rect x="8.5" y="17" width="5" height="5" fill="#00a4ef"/><rect x="14.5" y="17" width="5" height="5" fill="#ffb900"/></svg>
<!-- help -->
<svg style="left:570.2px;top:513.6px" width="18" height="18.6" viewBox="0 0 36 37"><circle cx="14.5" cy="22.5" r="13.5" fill="#fff"/><circle cx="14.5" cy="22.5" r="12" fill="#1e8fd8"/><path d="M10.5 18.5a4 4 0 1 1 6 3.5c-1.5 1-2 1.8-2 3.5" stroke="#fff" stroke-width="2.6" fill="none"/><circle cx="14.5" cy="30" r="1.6" fill="#fff"/><circle cx="26.5" cy="9.5" r="9" fill="#f9be16"/></svg>
<!-- mcafee -->
<svg style="left:598.2px;top:516.9px" width="13.8" height="15" viewBox="0 0 28 30"><path d="M1 1l13 6 13-6v20l-13 8-13-8z" fill="#c8232a"/><path d="M6 9l8 4 8-4v10l-8 5-8-5z" fill="#1c1c1c"/></svg>
<!-- edge -->
<svg style="left:624.9px;top:516.9px" width="15.2" height="15" viewBox="0 0 30 30"><defs><linearGradient id="eg1" x1="0.2" y1="0" x2="0.9" y2="0.8"><stop offset="0" stop-color="#1fa9e8"/><stop offset="0.6" stop-color="#3cc6d4"/><stop offset="1" stop-color="#7be06a"/></linearGradient><linearGradient id="eg2" x1="0" y1="0" x2="1" y2="1"><stop offset="0" stop-color="#1b7fd8"/><stop offset="1" stop-color="#0c4f9c"/></linearGradient></defs>
<path d="M15 0.5C23.5 0.5 29.5 6.5 29.5 13c0 4.5-3.5 7.5-8 7.5-3 0-5-1.2-5-3 0-1 1-1.5 1-3 0-4-4-7-9-7C4.5 7.5 1.5 10 0.7 12.3 2 5.5 7.5 0.5 15 0.5z" fill="url(#eg1)"/>
<path d="M0.7 12.3C1.5 10 4.5 7.5 8.5 7.5c5 0 9 3 9 7 0 1.5-1 2-1 3 0 1.8 2 3 5 3 1.2 0 2.3-.2 3.3-.6C22.5 26 18.5 29.5 14 29.5 6.5 29.5 0.5 23 0.5 15c0-1 .1-1.8.2-2.7z" fill="url(#eg2)"/>
<path d="M6 25c-3-3.5-3.5-9 .5-12 2.5-2 6-2 8.5-.5-3 0-6 2.5-6 6.5 0 2.5 1 4.5 3 6-2 .8-4.5.8-6 0z" fill="#0a3f80" opacity="0.7"/></svg>
<!-- vscode -->
<svg style="left:652.6px;top:516.9px" width="15.6" height="15" viewBox="0 0 100 100"><defs><linearGradient id="vg" x1="0" y1="0" x2="1" y2="0"><stop offset="0" stop-color="#0a7fd0"/><stop offset="0.7" stop-color="#1e90e0"/><stop offset="1" stop-color="#2aa6f2"/></linearGradient></defs><path fill="url(#vg)" d="M96.46 10.8L75.86.87a6.23 6.23 0 0 0-7.1 1.2L29.2 38.16 12 25.12a4.16 4.16 0 0 0-5.32.24L1.17 30.37a4.17 4.17 0 0 0 0 6.16L16.08 50 1.17 63.47a4.17 4.17 0 0 0 0 6.16l5.52 5a4.16 4.16 0 0 0 5.32.24l17.2-13.04 39.56 36.09a6.23 6.23 0 0 0 7.1 1.2l20.6-9.92A6.24 6.24 0 0 0 100 83.56V16.44a6.24 6.24 0 0 0-3.54-5.64zM75 72.7L45 50l30-22.7z"/></svg>
<div class="a" style="left:658px;top:534.7px;width:4.2px;height:1.9px;background:#9a9a9a;border-radius:1px"></div>
<!-- tray -->
<svg style="left:804px;top:522.4px" width="7.3" height="4.5" viewBox="0 0 14 8.5"><path d="M1.2 7.3L7 1.5l5.8 5.8" stroke="#f2f2f2" stroke-width="2.1" fill="none"/></svg>
<svg style="left:822.5px;top:520.9px" width="10.6" height="6.9" viewBox="0 0 22 14"><path d="M5 13.5h13a3.5 3.5 0 0 0 0-7A6 6 0 0 0 7 5.5 4 4 0 0 0 5 13.5z" fill="#e6e6e6"/></svg>
<svg style="left:842.8px;top:520px" width="8.9" height="10" viewBox="0 0 18 20"><path d="M17 1L1 8.5l7 2.5 2.5 8z" stroke="#5ccdf0" stroke-width="1.9" fill="none" stroke-linejoin="round"/></svg>
<svg style="left:858px;top:515px" width="52" height="20" viewBox="0 0 52 20" fill="none" stroke="#f0f0f0" stroke-linecap="round">
<path d="M5.2 8.6A6.8 6.8 0 0 1 14.6 8.6" stroke-width="1.1"/><path d="M6.6 10.3A4.6 4.6 0 0 1 13.2 10.3" stroke-width="1.1"/><path d="M8.2 11.9A2.4 2.4 0 0 1 11.6 11.9" stroke-width="1.1"/><circle cx="9.9" cy="12.6" r="0.6" fill="#f0f0f0" stroke="none"/>
<path d="M20 8.3H21.7L24.1 6.2V13.1L21.7 11H20Z" stroke-width="1.1" stroke-linejoin="round"/><path d="M25.9 7.6A3.4 3.4 0 0 1 25.9 11.8" stroke="#a8a8a8" stroke-width="0.9"/><path d="M28 6.2A5.6 5.6 0 0 1 28 13.2" stroke="#8a8a8a" stroke-width="0.9"/>
<path d="M35.6 7V12.4H42.6L44.8 9.7L42.6 7H36.8" stroke-width="1.2" stroke-linejoin="round"/><path d="M35.6 5.4V8" stroke-width="1.3"/>
</svg>
<div class="a" style="left:900px;top:514.5px;width:47.3px;text-align:right;font-size:7.3px;line-height:9px;color:#f0f0f0;white-space:nowrap">20:41</div>
<div class="a" style="left:890px;top:524.6px;width:57.5px;text-align:right;font-size:7.3px;line-height:9px;color:#f0f0f0;white-space:nowrap;word-spacing:0.6px">21 7 2023</div>

</body></html>
